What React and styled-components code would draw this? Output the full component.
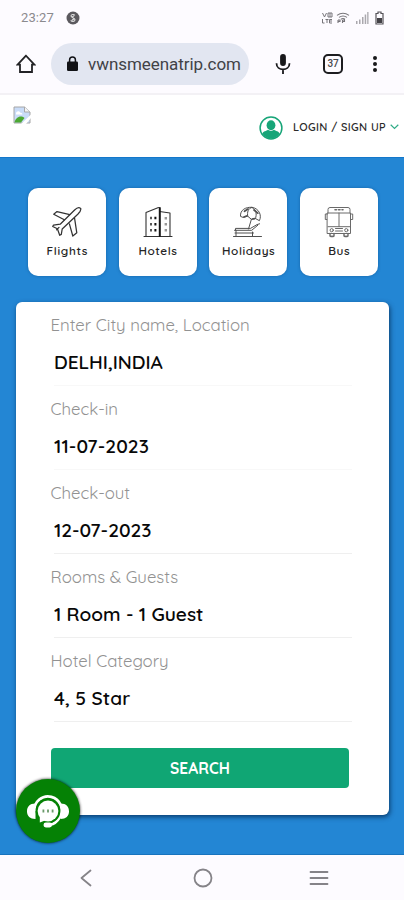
import React from "react";
import styled, { createGlobalStyle } from "styled-components";

const Global = createGlobalStyle`
  * { box-sizing: border-box; }
  body { margin: 0; background: #fdfbff; }
  svg { display: block; flex: none; }
`;

const Screen = styled.div`
  position: relative;
  display: flex;
  flex-direction: column;
  width: 404px;
  height: 900px;
  overflow: hidden;
  background: #fdfbff;
  font-family: Quicksand, Lato, sans-serif;
`;

const StatusBar = styled.header`
  display: flex;
  align-items: center;
  height: 35px;
  padding: 0 20px 0 21px;
  font-family: Roboto, sans-serif;
`;
const Clock = styled.span`
  width: 45px;
  font-size: 13px;
  letter-spacing: 0.1px;
  color: #8b8a8e;
`;
const StatusIcons = styled.div`
  display: flex;
  align-items: center;
  margin-left: auto;
`;
const StatusSlot = styled.span`
  margin-left: ${(p) => p.$gap}px;
`;

const BrowserBar = styled.div`
  display: flex;
  align-items: center;
  height: 60px;
  padding: 0 20px 0 16px;
  border-bottom: 2px solid #f3f1f5;
`;
const AddressPill = styled.div`
  display: flex;
  align-items: center;
  width: 198px;
  height: 42px;
  margin: 0 26px 0 15px;
  padding-left: 15px;
  border-radius: 21px;
  background: #e2e6f1;
`;
const Address = styled.span`
  margin-left: 9px;
  font: 400 17px/20px Roboto, sans-serif;
  letter-spacing: ${(p) => p.$track}px;
  color: #414247;
  white-space: nowrap;
`;

const SiteHeader = styled.div`
  display: flex;
  justify-content: space-between;
  height: 62px;
  padding: 11px 5px 0 13px;
  background: #fff;
`;
const Login = styled.div`
  display: flex;
  align-items: center;
  height: 43px;
`;
const LoginText = styled.span`
  margin: -1px 4px 0 10px;
  width: 93px;
  font-size: 11px;
  font-weight: 600;
  letter-spacing: ${(p) => p.$track}px;
  color: #2b2b2b;
  white-space: nowrap;
`;

const Main = styled.main`
  height: 698px;
  padding: 30px 15px 0 16px;
  background: #2386d4;
  border-top: 1px solid #1477ca;
  border-bottom: 1px solid #1773bd;
`;
const Categories = styled.nav`
  display: grid;
  grid-template-columns: repeat(4, 78px);
  justify-content: space-between;
  padding: 0 11px 0 12px;
`;
const Category = styled.div`
  display: flex;
  flex-direction: column;
  align-items: center;
  height: 88px;
  padding-top: 18px;
  border-radius: 10px;
  background: #fff;
  box-shadow: 0 0 3px rgba(10, 65, 120, 0.5);
`;
const CategoryName = styled.span`
  margin-top: 5px;
  font-size: 11.8px;
  line-height: 16px;
  font-weight: 600;
  letter-spacing: ${(p) => p.$track}px;
  margin-right: -${(p) => p.$track}px;
  color: #252525;
`;

const Form = styled.section`
  height: 513px;
  margin-top: 26px;
  padding: 11px 40px 0 35px;
  border-radius: 6px;
  background: #fff;
  box-shadow: 1px 2px 5px rgba(0, 35, 75, 0.75);
`;
const Field = styled.div`
  display: flex;
  flex-direction: column;
  height: 84px;
`;
const Label = styled.span`
  margin-left: -0.5px;
  font-size: 16.8px;
  line-height: 24px;
  color: #929292;
  white-space: nowrap;
`;
const Value = styled.span`
  height: 49px;
  margin: 0 -3px 0 3px;
  padding-top: 12px;
  border-bottom: 1px solid ${(p) => (p.$faint ? "#f8f8f8" : "#efefef")};
  font-size: 19.1px;
  line-height: 26px;
  font-weight: 600;
  letter-spacing: ${(p) => p.$track}px;
  color: #080808;
  white-space: nowrap;
`;
const SearchButton = styled.button`
  display: block;
  width: 298px;
  height: 40px;
  margin-top: 15px;
  padding: 0;
  border: 0;
  border-radius: 4px;
  background: #10a674;
  color: #fff;
  font: 700 15.5px/40px Quicksand, Lato, sans-serif;
  letter-spacing: 0.1px;
`;

const ChatBubble = styled.div`
  position: absolute;
  left: 16px;
  top: 779px;
  display: grid;
  place-items: center;
  width: 64px;
  height: 64px;
  border-radius: 50%;
  background: #058105;
  box-shadow: 0 0 3px rgba(0, 0, 0, 0.9);
`;

const NavBar = styled.footer`
  display: flex;
  align-items: center;
  height: 45px;
  padding: 0 0 0 80px;
  color: #858388;
`;
const NavItem = styled.div`
  margin-right: ${(p) => p.$after}px;
`;

const line = { fill: "none", stroke: "currentColor", strokeLinecap: "round", strokeLinejoin: "round" };

const ShazamBadge = () => (
  <svg width="14" height="14" viewBox="0 0 14 14">
    <circle cx="7" cy="7" r="6.5" fill="#5b595e" />
    <path d="M8.9 4.3C7.8 3 5 3.3 5 5.1c0 1.6 4 1.8 4 3.7 0 1.9-3 2.1-4.3.6M6 6.1l2-1.3M6 9l2-1.1" fill="none" stroke="#ddd" strokeWidth="1.1" />
  </svg>
);
const VoLte = () => (
  <svg width="11" height="12" viewBox="0 0 11 12" fill="none" stroke="#77757a" strokeWidth="1">
    <path d="M.5 1 2.5 5 4.5 1M6 1v4h4V1zM8 1v4M.5 7v4h2M3.5 7.5h3M5 7.5V11M10 7.5H7.5V11H10M7.5 9H10" />
  </svg>
);
const WifiIcon = () => (
  <svg width="14" height="12" viewBox="0 0 14 12" fill="none" stroke="#77757a" strokeWidth="1.1">
    <path d="M1 3.4Q7-1 13 3.4M3 5.4q4-2.8 8 0M5 7.2q2-1.4 4 0M2 8v3M2 8h2v1.5H2M6.5 8v3M6.5 8h2v1.5h-2" />
  </svg>
);
const SignalIcon = () => (
  <svg width="13" height="12" viewBox="0 0 13 12" fill="#aaa8ad">
    <path d="M0 9h1.5v3H0zM3 7.5h1.5V12H3zM6 5h1.5v7H6z" /><path d="M8.7 2.5h1.5V12H8.7zM11.2 0h1.3v12h-1.3z" />
  </svg>
);
const BatteryIcon = () => (
  <svg width="9" height="14" viewBox="0 0 9 14">
    <path d="M3 1h3v1.5h2V13H1V2.5h2z" fill="none" stroke="#555358" strokeWidth="1.2" /><path d="M2 7h5v5H2z" fill="#434146" />
  </svg>
);
const HomeIcon = () => (
  <svg width="20" height="20" viewBox="0 0 20 20" fill="none" stroke="#222225" strokeWidth="1.8">
    <path d="M10 1.7 1.6 10.6H4V18h12v-7.4h2.4z" />
  </svg>
);
const LockIcon = () => (
  <svg width="13" height="16" viewBox="0 0 13 16">
    <rect x="1" y="5.5" width="11" height="9.5" rx="1.3" fill="#111216" />
    <path d="M3.6 6V3.8a2.9 2.9 0 0 1 5.8 0V6" fill="none" stroke="#111216" strokeWidth="1.5" />
  </svg>
);
const MicIcon = () => (
  <svg width="16" height="22" viewBox="0 0 16 22">
    <rect x="5.1" y="1" width="5.8" height="12" rx="2.9" fill="#18181b" />
    <path d="M1.5 10.3c0 8.2 13 8.2 13 0M8 16.5V21" fill="none" stroke="#18181b" strokeWidth="1.8" />
  </svg>
);
const TabsBox = styled.div`
  display: grid;
  place-items: center;
  width: 20px;
  height: 20px;
  margin-left: 32px;
  border: 2px solid #1d1d20;
  border-radius: 5px;
  font: 500 10px/1 Roboto, sans-serif;
  letter-spacing: -0.3px;
  color: #4a4a4e;
`;
const Dots = styled.div`
  display: flex;
  flex-direction: column;
  gap: 2px;
  margin-left: auto;
  padding-right: 7px;
`;
const Dot = styled.i`
  width: 4px;
  height: 4px;
  border-radius: 2px;
  background: #18181b;
`;
const BrokenImage = () => (
  <svg width="18" height="18" viewBox="0 0 18 18">
    <path d="M1 1h10.5L17 6v11H1z" fill="#c9dcf8" stroke="#a6a6a6" />
    <path d="M11.5 1v5H17" fill="#f4f4f4" stroke="#a9a9a9" />
    <path d="M3 7.5c0-3 4-3 4.3-.8 1.8-.2 2.2 1 2 1.8H3z" fill="#fff" />
    <path d="M1.5 16.5c1-5 6-8 10-4.5l-3.5 4.5z" fill="#4ba832" />
    <path d="M8 18 18 8.5V12l-5 6z" fill="#fff" />
  </svg>
);
const UserIcon = () => (
  <svg width="24" height="24" viewBox="0 0 24 24">
    <circle cx="12" cy="12" r="10.9" fill="#fff" stroke="#17a578" strokeWidth="1.5" />
    <ellipse cx="12" cy="9.2" rx="4.4" ry="5" fill="#17a578" />
    <path d="M3.4 17.7c1-2.7 4-2.5 5.5-3.9q3.1 2.3 6.2 0c1.5 1.4 4.5 1.2 5.5 3.9-3.5 6.3-13.7 6.3-17.2 0z" fill="#17a578" />
  </svg>
);
const ChevronIcon = () => (
  <svg width="9" height="7" viewBox="0 0 9 7"><path d="m.7 .7 3.8 3.7 3.8-3.7" fill="none" stroke="#31ac87" strokeWidth="1.2" /></svg>
);

const PlaneIcon = () => (
  <svg width="32" height="32" viewBox="0 0 32 32" {...line} color="#333" strokeWidth="1.25">
    <path d="M29.6 2.4c-1.7-1.5-4.2-.2-6 1.6L9.2 18.2l-6.7 1-.8 1.3 4.7 2.2 2.3 6.6 1.6-.9.9-5.4L26.8 8.2c2-2 3.6-4.3 2.8-5.8z" />
    <path d="M18.8 8.7 6 5.6 2.7 8.2l10.6 5.6M23.6 12.3l2.2 14.5-4 3.2-3.4-12.2M5.6 23.8l2.4-2.4" />
  </svg>
);
const HotelIcon = () => (
  <svg width="32" height="32" viewBox="0 0 32 32" {...line} color="#333" strokeWidth="1.1">
    <path d="M2 30.5h28M4 30V6.5l12.5-5M17.5 5.5 28 7v23" /><path d="M17.8 2V30" strokeWidth="2" stroke="#151515" />
    <path d="M9 10.7v2.6m0 3.6v2.6m0 3.5v2.6" stroke="#444" strokeWidth="1.8" strokeLinecap="butt" />
    <path d="M13.4 10.7v2.6m0 3.6v2.6m0 3.5v2.6" stroke="#111" strokeWidth="2" strokeLinecap="butt" />
    <path d="M23.8 11v2.6m0 3.3v2.6m0 3.5v2.6" stroke="#999" strokeWidth="2.4" strokeLinecap="butt" />
  </svg>
);
const HolidayIcon = () => (
  <svg width="32" height="32" viewBox="0 0 32 32" {...line} color="#505050" strokeWidth="1">
    <path d="M8.5 10C7.8 4 14 .7 20 1.4c6.5.8 10.2 7.5 7.4 13.3l-4-2.2-4 .8-3.7-3.1-4.3 1.1zM20 1.4c-4 .8-5 5-4.3 8.8M20 1.4c4.5 2.8 5 7 3.4 11.1M19.4 13.3 16.5 23M3.5 24v-1.6H18.5L25 18.6l2.6-.8M2.5 24.3h17.2l6-5M3 27h18.5M4 24.3v6M20.5 26v4.3M1.5 30.5h28" />
    <path d="M12.5 5.3 16 3M22 4l3.8 3.2M12 11l2.5-1M20.5 13l2-.4" strokeWidth="1.7" />
  </svg>
);
const BusIcon = () => (
  <svg width="32" height="32" viewBox="0 0 32 32" {...line} color="#6a6a6a" strokeWidth="1">
    <path d="M5 7V3.5Q5 1.5 7 1.5h18q2 0 2 2V7M4.5 7h23v20.5h-23zM16 7v13.5M5 20.7h22M4.5 8H2.3v5.5h1.5M27.5 8h2.2v5.5h-1.5M12.5 22.5h7M12.5 25h7" />
    <path d="M12 3.7h8" strokeWidth="1.6" strokeDasharray="1.5 2" />
    <circle cx="8.7" cy="24.2" r="1.6" /><circle cx="23.3" cy="24.2" r="1.6" /><path d="M7 27.5v2.5q2 1 4 0v-2.5M21 27.5v2.5q2 1 4 0v-2.5" strokeWidth="1.4" />
  </svg>
);
const SupportIcon = () => (
  <svg width="44" height="36" viewBox="0 0 44 36">
    <path d="M9.5 10.5C3.5 10.5 1 14 1 18.5S4 26 9.5 26zM34.5 10.5c6 0 8.5 3.5 8.5 8S40 26 34.5 26z" fill="#fff" />
    <path d="M8.4 18A13.6 13.8 0 1 1 33.5 24.5Q30 30.7 24 31.5" fill="none" stroke="#fff" strokeWidth="2.8" />
    <circle cx="22" cy="18" r="12.4" fill="#058105" />
    <circle cx="22" cy="18" r="10.4" fill="#fff" />
    <path d="M13.8 23v6.6l6.5-2.5z" fill="#fff" />
    <rect x="17.5" y="29.6" width="8.5" height="4.8" rx="2.4" fill="#fff" />
    <path d="M16.5 16.5h1.8v3h-1.8zM21.1 16.5h1.8v3h-1.8zM25.7 16.5h1.8v3h-1.8z" fill="#6a9a6a" />
  </svg>
);

const categories = [
  ["Flights", PlaneIcon, 0.65],
  ["Hotels", HotelIcon, 0.55],
  ["Holidays", HolidayIcon, 0.6],
  ["Bus", BusIcon, 0.5],
];
const fields = [
  ["Enter City name, Location", "DELHI,INDIA", 0, true],
  ["Check-in", "11-07-2023", 0.1, true],
  ["Check-out", "12-07-2023", 0, false],
  ["Rooms & Guests", "1 Room - 1 Guest", 0, false],
  ["Hotel Category", "4, 5 Star", 0.1, false],
];

export default function App() {
  return (
    <Screen>
      <Global />
      <StatusBar>
        <Clock>23:27</Clock>
        <ShazamBadge />
        <StatusIcons>
          <VoLte />
          <StatusSlot $gap={3}><WifiIcon /></StatusSlot>
          <StatusSlot $gap={6}><SignalIcon /></StatusSlot>
          <StatusSlot $gap={6}><BatteryIcon /></StatusSlot>
        </StatusIcons>
      </StatusBar>
      <BrowserBar>
        <HomeIcon />
        <AddressPill>
          <LockIcon />
          <Address $track={-0.05}>vwnsmeenatrip.com</Address>
        </AddressPill>
        <MicIcon />
        <TabsBox>37</TabsBox>
        <Dots><Dot /><Dot /><Dot /></Dots>
      </BrowserBar>
      <SiteHeader>
        <BrokenImage />
        <Login>
          <UserIcon />
          <LoginText $track={0.35}>LOGIN / SIGN UP</LoginText>
          <ChevronIcon />
        </Login>
      </SiteHeader>
      <Main>
        <Categories>
          {categories.map(([name, Icon, track]) => (
            <Category key={name}>
              <Icon />
              <CategoryName $track={track}>{name}</CategoryName>
            </Category>
          ))}
        </Categories>
        <Form>
          {fields.map(([label, value, valueTrack, faint]) => (
            <Field key={label}>
              <Label>{label}</Label>
              <Value $track={valueTrack} $faint={faint}>{value}</Value>
            </Field>
          ))}
          <SearchButton>SEARCH</SearchButton>
        </Form>
      </Main>
      <NavBar>
        <NavItem $after={101}>
          <svg width="12" height="18" viewBox="0 0 12 18" {...line} strokeWidth="1.8"><path d="M10.5 1.5 1.5 9l9 7.5" /></svg>
        </NavItem>
        <NavItem $after={96}>
          <svg width="20" height="20" viewBox="0 0 20 20" {...line} strokeWidth="1.8"><circle cx="10" cy="10" r="8.5" /></svg>
        </NavItem>
        <NavItem $after={0}>
          <svg width="20" height="16" viewBox="0 0 20 16" {...line} strokeWidth="1.8"><path d="M1.5 2h17M1.5 8h17M1.5 14h17" /></svg>
        </NavItem>
      </NavBar>
      <ChatBubble><SupportIcon /></ChatBubble>
    </Screen>
  );
}
